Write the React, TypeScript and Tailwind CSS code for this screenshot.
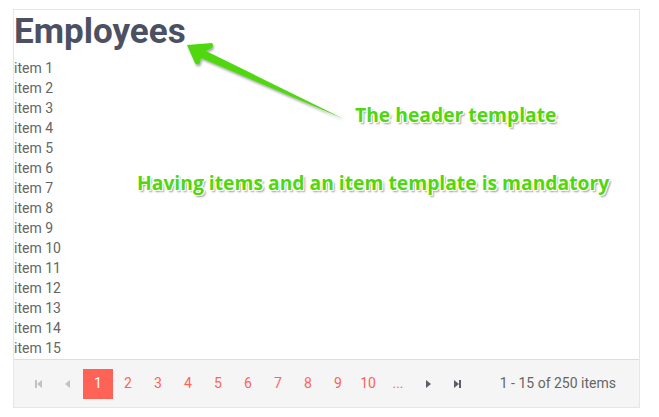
import React from "react";

const items = Array.from({ length: 15 }, (_, i) => `item ${i + 1}`);
const pages = [1, 2, 3, 4, 5, 6, 7, 8, 9, 10];

const calloutText =
  "absolute whitespace-nowrap font-['Open_Sans',sans-serif] font-bold text-[#50d80e] [text-shadow:-1px_-1px_0_#fff,1px_-1px_0_#fff,-1px_1px_0_#fff,1px_1px_0_#fff,0_-1px_0_#fff,0_1px_0_#fff,-1px_0_0_#fff,1px_0_0_#fff,2px_2px_2px_#9a9a9a]";

const NavIcon = ({ kind, disabled }: { kind: "first" | "prev" | "next" | "last"; disabled?: boolean }) => (
  <svg width="10" height="10" viewBox="0 0 10 10" className={disabled ? "text-[#c2c2c2]" : "text-[#5b5f6b]"}>
    {kind === "first" && (
      <>
        <rect x="2" y="1" width="2" height="8" fill="currentColor" />
        <path d="M9 1 L4 5 L9 9 Z" fill="currentColor" />
      </>
    )}
    {kind === "prev" && <path d="M7 1 L2 5 L7 9 Z" fill="currentColor" />}
    {kind === "next" && <path d="M3 1 L8 5 L3 9 Z" fill="currentColor" />}
    {kind === "last" && (
      <>
        <path d="M1 1 L6 5 L1 9 Z" fill="currentColor" />
        <rect x="6" y="1" width="2" height="8" fill="currentColor" />
      </>
    )}
  </svg>
);

export default function App() {
  return (
    <div className="relative h-[417px] w-[659px] bg-white pl-[13px] pt-[9px] font-['Roboto',sans-serif]">
      <div className="flex h-[399px] w-[627px] flex-col border border-[#e6e6e6]">
        <h1 className="h-[48px] pt-[1px] text-[35px] leading-[42px] font-bold text-[#4b5163]">Employees</h1>
        <ul className="flex flex-col">
          {items.map((item) => (
            <li key={item} className="h-[20px] text-[14px] leading-[20px] text-[#656565]">
              {item}
            </li>
          ))}
        </ul>
        <div className="mt-auto flex h-[48px] items-center border-t border-[#dedede] bg-[#f5f5f5] pl-[9px] pr-[23px] text-[14px]">
          <span className="flex h-[30px] w-[30px] items-center justify-center">
            <NavIcon kind="first" disabled />
          </span>
          <span className="flex h-[30px] w-[30px] items-center justify-center">
            <NavIcon kind="prev" disabled />
          </span>
          {pages.map((p) => (
            <span
              key={p}
              className={
                p === 1
                  ? "flex h-[30px] w-[30px] items-center justify-center bg-[#ff6358] text-white"
                  : "flex h-[30px] w-[30px] items-center justify-center text-[#ff6358]"
              }
            >
              {p}
            </span>
          ))}
          <span className="flex h-[30px] w-[30px] items-center justify-center text-[#ff6358]">...</span>
          <span className="flex h-[30px] w-[30px] items-center justify-center">
            <NavIcon kind="next" />
          </span>
          <span className="flex h-[30px] w-[30px] items-center justify-center">
            <NavIcon kind="last" />
          </span>
          <span className="ml-auto text-[#656565]">1 - 15 of 250 items</span>
        </div>
      </div>

      <svg className="pointer-events-none absolute left-0 top-0" width="659" height="417" viewBox="0 0 659 417">
        <defs>
          <filter id="sh" x="-10%" y="-10%" width="130%" height="130%">
            <feDropShadow dx="1" dy="2" stdDeviation="1" floodColor="#555" floodOpacity="0.5" />
          </filter>
        </defs>
        <path
          d="M187 45 L212 43 Q214 45 212 48 L206 51 L344 119 L201 58 L200 63 Q197 66 195 63 Z"
          fill="#4fd80b"
          filter="url(#sh)"
        />
      </svg>

      <span className={`${calloutText} left-[355px] top-[102px] text-[19.3px] leading-[26px]`}>The header template</span>
      <span className={`${calloutText} left-[137px] top-[170px] text-[19.3px] leading-[26px]`}>
        Having items and an item template is mandatory
      </span>
    </div>
  );
}
